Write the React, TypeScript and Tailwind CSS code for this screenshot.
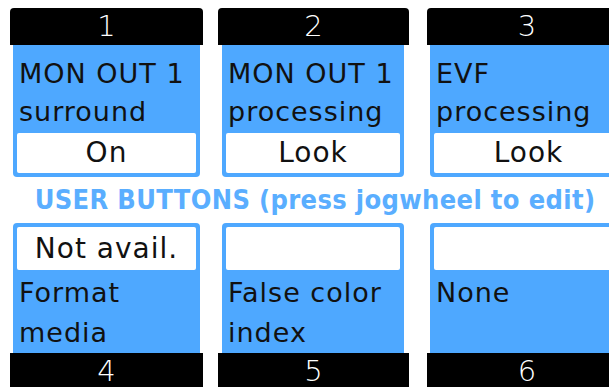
import React from "react";

const FONT = { fontFamily: '"DejaVu Sans", "Liberation Sans", sans-serif' };

type Col = { n: string; l1: string; l2: string; v: string };

const top: Col[] = [
  { n: "1", l1: "MON OUT 1", l2: "surround", v: "On" },
  { n: "2", l1: "MON OUT 1", l2: "processing", v: "Look" },
  { n: "3", l1: "EVF", l2: "processing", v: "Look" },
];
const bottom: Col[] = [
  { n: "4", l1: "Format", l2: "media", v: "Not avail." },
  { n: "5", l1: "False color", l2: "index", v: "" },
  { n: "6", l1: "None", l2: "", v: "" },
];

const widths = ["w-[193px]", "w-[191px]", "w-[200px]"];
const inner = ["mx-[3px]", "ml-[4px] mr-[5px]", "ml-[3px] mr-0"];

function TopCard({ c, i }: { c: Col; i: number }) {
  return (
    <div className={`${widths[i]} shrink-0 flex flex-col`}>
      <div className="h-[37px] bg-black rounded-t-[4px] text-white text-[29px] leading-[37px] text-center font-light">
        {c.n}
      </div>
      <div className={`${inner[i]} bg-[#4ea8ff] rounded-b-[4px] flex flex-col`}>
        <div className="pt-[10px] pl-[6px] text-[27px] leading-[38px] text-[#111] tracking-[1px] h-[88px]">
          <div>{c.l1}</div>
          <div>{c.l2}</div>
        </div>
        <div className="mx-[4px] mb-[4px] bg-white rounded-[2px] h-[40px] text-[28px] leading-[40px] text-center text-[#111] tracking-[1px]">
          {c.v}
        </div>
      </div>
    </div>
  );
}

function BottomCard({ c, i }: { c: Col; i: number }) {
  return (
    <div className={`${widths[i]} shrink-0 flex flex-col`}>
      <div className={`${inner[i]} bg-[#4ea8ff] rounded-t-[4px] flex flex-col pt-[4px]`}>
        <div className="mx-[4px] bg-white rounded-[2px] h-[43px] text-[28px] leading-[43px] text-center text-[#111] tracking-[1px]">
          {c.v}
        </div>
        <div className="pl-[6px] text-[27px] leading-[40px] text-[#111] tracking-[1px] h-[83px] pt-[3px]">
          <div>{c.l1}</div>
          <div>{c.l2}</div>
        </div>
      </div>
      <div className="h-[37px] bg-black rounded-b-[4px] text-white text-[29px] leading-[37px] text-center font-light">
        {c.n}
      </div>
    </div>
  );
}

export default function App() {
  return (
    <div className="w-[609px] h-[387px] bg-white overflow-hidden" style={FONT}>
      <div className="flex pt-[8px] pl-[10px] gap-x-[15px]">
        <TopCard c={top[0]} i={0} />
        <TopCard c={top[1]} i={1} />
        <div className="pl-[3px] flex">
          <TopCard c={top[2]} i={2} />
        </div>
      </div>
      <div className="h-[46px] flex items-center justify-center pl-[21px] text-[27px] font-bold font-stretch-condensed text-[#5aaeff] tracking-[0.35px] whitespace-nowrap">
        USER BUTTONS (press jogwheel to edit)
      </div>
      <div className="flex pl-[10px] gap-x-[15px]">
        <BottomCard c={bottom[0]} i={0} />
        <BottomCard c={bottom[1]} i={1} />
        <div className="pl-[3px] flex">
          <BottomCard c={bottom[2]} i={2} />
        </div>
      </div>
    </div>
  );
}
